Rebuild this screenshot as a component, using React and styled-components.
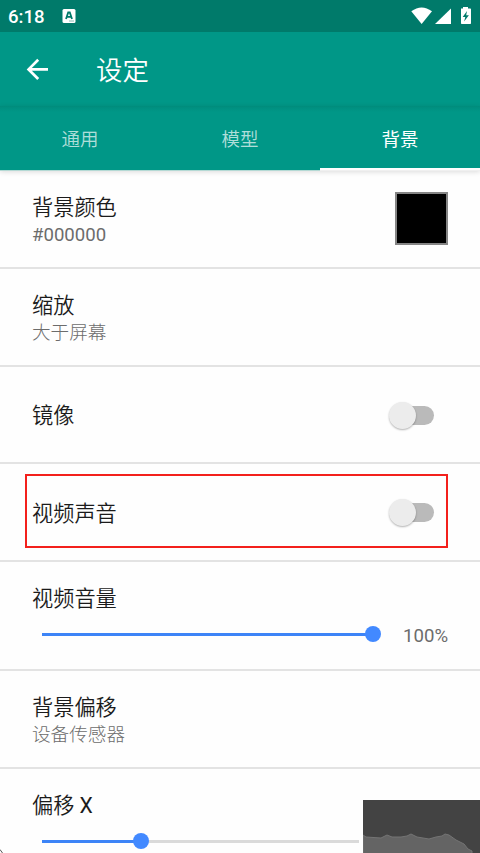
import styled, {createGlobalStyle} from 'styled-components';

const GlobalStyle = createGlobalStyle`
	* {
		box-sizing: border-box;
	}
	body {
		margin: 0;
		overflow: hidden;
		background: #fefefe;
	}
`;
const Screen = styled.div`
	position: relative;
	display: flex;
	flex-direction: column;
	width: 480px;
	height: 853px;
	overflow: hidden;
	background: #fefefe;
	color: #1b1b1b;
	font-family: Roboto, "Noto Sans CJK SC", sans-serif;
`;
const StatusBar = styled.div`
	display: flex;
	flex-shrink: 0;
	align-items: center;
	height: 32px;
	padding: 0 8px;
	background: #007a6a;
	color: #fff;
`;
const Clock = styled.span`
	width: 54px;
	font-size: 18.6px;
	font-weight: 500;
	line-height: 32px;
	padding-top: 2px;
`;
const StatusIcons = styled.div`
	display: flex;
	margin-left: auto;
	height: 32px;
`;
const AppBar = styled.header`
	display: flex;
	flex-shrink: 0;
	align-items: center;
	height: 74px;
	padding-left: 24px;
	background: #009787;
	color: #fff;
`;
const Heading = styled.h1`
	margin: 4px 0 0 44px;
	font-size: 26.4px;
	font-weight: 350;
	line-height: 36px;
`;
const Tabs = styled.nav`
	display: flex;
	flex-shrink: 0;
	height: 65px;
	background: linear-gradient(#008b7b 0, #009081 2px, #009787 6px);
	border-bottom: 1px solid #b4d9d4;
	box-shadow: 0 1px 5px rgba(0, 0, 0, 0.14);
`;
const Tab = styled.div`
	flex: 1;
	padding-top: 4px;
	border-bottom: 2px solid ${({$active}) => ($active ? '#fff' : 'transparent')};
	color: ${({$active}) => ($active ? '#fff' : 'rgba(255, 255, 255, 0.7)')};
	/* the indicator runs over the bar's bottom line */
	box-shadow: ${({$active}) => ($active ? '0 1px 0 #f0f0f0' : 'none')};
	font-size: 18.5px;
	font-weight: ${({$active}) => ($active ? 400 : 350)};
	line-height: 60px;
	text-align: center;
`;
const Row = styled.section`
	position: relative;
	display: flex;
	flex-shrink: 0;
	align-items: center;
	justify-content: space-between;
	height: ${({$height}) => $height}px;
	padding: 0 32px;
	border-bottom: 2px solid #e3e3e3;
`;
const SliderRow = styled(Row)`
	flex-direction: column;
	align-items: stretch;
	justify-content: flex-start;
	padding-top: 23px;
`;
const Labels = styled.div`
	padding-top: 3px;
`;
const Title = styled.div`
	font-size: 21.2px;
	font-weight: 350;
	line-height: 28px;
`;
const Latin = styled.span`
	font-weight: 400;
`;
const Summary = styled.div`
	color: #6c6c6c;
	font-size: 18.6px;
	font-weight: ${({$numeric}) => ($numeric ? 400 : 300)};
	line-height: 26px;
`;
const Swatch = styled.div`
	width: 53px;
	height: 53px;
	margin-bottom: 1px;
	border: 2px solid #858585;
	background: #000;
`;
const Switch = styled.div`
	display: flex;
	align-items: center;
	width: 41px;
	height: 19px;
	margin: 1px 14px 0 0;
	border-radius: 10px;
	background: #bababa;
`;
const Knob = styled.span`
	flex-shrink: 0;
	width: 27px;
	height: 27px;
	margin-left: -4px;
	border-radius: 50%;
	background: #ececec;
	box-shadow: 0 1px 2px rgba(0, 0, 0, 0.3);
`;
const Highlight = styled.div`
	position: absolute;
	top: 10px;
	left: 25px;
	width: 423px;
	height: 74px;
	border: 2px solid #f3201c;
`;
const SliderLine = styled.div`
	display: flex;
	align-items: center;
	height: 26px;
	margin-top: 8px;
`;
const Track = styled.div`
	display: flex;
	align-items: center;
	width: ${({$width}) => $width}px;
	height: 3px;
	margin-left: 10px;
	background: #dadada;
`;
const Fill = styled.span`
	height: 3px;
	background: #3d84f7;
`;
const Thumb = styled.span`
	flex-shrink: 0;
	width: 16px;
	height: 16px;
	margin: 0 -8px;
	border-radius: 50%;
	background: #4289ff;
`;
const Value = styled(Summary)`
	margin: 4px 0 0 auto;
`;
const Monitor = styled.svg`
	position: absolute;
	right: 0;
	bottom: 0;
	background: #434343;
`;
const Corner = styled.svg`
	position: absolute;
	left: 0;
	bottom: 0;
`;

function Slider({value, label, width}) {
	return (
		<SliderLine>
			<Track $width={width}>
				<Fill style={{width: `${value}%`}} />
				<Thumb />
			</Track>
			{label && <Value $numeric>{label}</Value>}
		</SliderLine>
	);
}

function Setting({title, summary, numeric, height, children}) {
	return (
		<Row $height={height}>
			<Labels>
				<Title>{title}</Title>
				{summary && <Summary $numeric={numeric}>{summary}</Summary>}
			</Labels>
			{children}
		</Row>
	);
}

export default function App() {
	return (
		<Screen>
			<GlobalStyle />
			<StatusBar>
				<Clock>6:18</Clock>
				<svg width="14" height="14" viewBox="0 0 14 14">
					<rect x="0.5" width="13" height="14" rx="1.5" fill="#fff" />
					<path d="M4 10 6.2 3.5h1.6L10 10M5 7.8h4" fill="none" stroke="#007a6a" strokeWidth="1.8" />
					<path d="M7 12h5" stroke="#8abdb5" strokeWidth="1" />
				</svg>
				<StatusIcons>
					<svg width="64" height="32" viewBox="408 0 64 32" fill="#fff">
						<path d="M411.3 11.2Q421.6 3.6 432 11.2L421.6 24Z" />
						<path d="M435 24 451 8.5V24Z" />
						<path d="M461 8.5h2V7h5v1.5h2.3q.7 0 .7.7v14q0 .8-.7.8h-8.6q-.7 0-.7-.8Z" />
						<path d="m467 11-4.3 6h2.6l-1.2 4.5 4.8-6.2h-2.7Z" fill="#007a6a" />
					</svg>
				</StatusIcons>
			</StatusBar>
			<AppBar>
				<svg width="28" height="28" viewBox="0 0 28 28" fill="none" stroke="#fff" strokeWidth="2.7">
					<path d="M24 14.4H4.5M14.2 4.8 4.6 14.4l9.6 9.6" />
				</svg>
				<Heading>设定</Heading>
			</AppBar>
			<Tabs>
				<Tab>通用</Tab>
				<Tab>模型</Tab>
				<Tab $active>背景</Tab>
			</Tabs>
			<Setting title="背景颜色" summary="#000000" numeric height={98}>
				<Swatch />
			</Setting>
			<Setting title="缩放" summary="大于屏幕" height={98} />
			<Setting title="镜像" height={97}>
				<Switch><Knob /></Switch>
			</Setting>
			<Setting title="视频声音" height={98}>
				<Switch><Knob /></Switch>
				<Highlight />
			</Setting>
			<SliderRow $height={109}>
				<Title>视频音量</Title>
				<Slider value={100} label="100%" width={331} />
			</SliderRow>
			<Setting title="背景偏移" summary="设备传感器" height={98} />
			<SliderRow $height={109}>
				<Title>偏移 <Latin>X</Latin></Title>
				<Slider value={31.3} width={317} />
			</SliderRow>
			<Monitor width="117" height="53" viewBox="0 0 117 53">
				<path
					d="M0 35 3 37 18 38 24 35 29 37 38 37 44 36 48 34 54 37 66 39 73 37 79 36 82 34 86 35 93 40 101 44 105 49 109 51V54H0Z"
					fill="#646464"
					stroke="#747474"
				/>
			</Monitor>
			<Corner width="3" height="4" viewBox="0 0 3 4">
				<path d="M0 .5 2.5 4" stroke="#555" fill="none" />
			</Corner>
		</Screen>
	);
}
